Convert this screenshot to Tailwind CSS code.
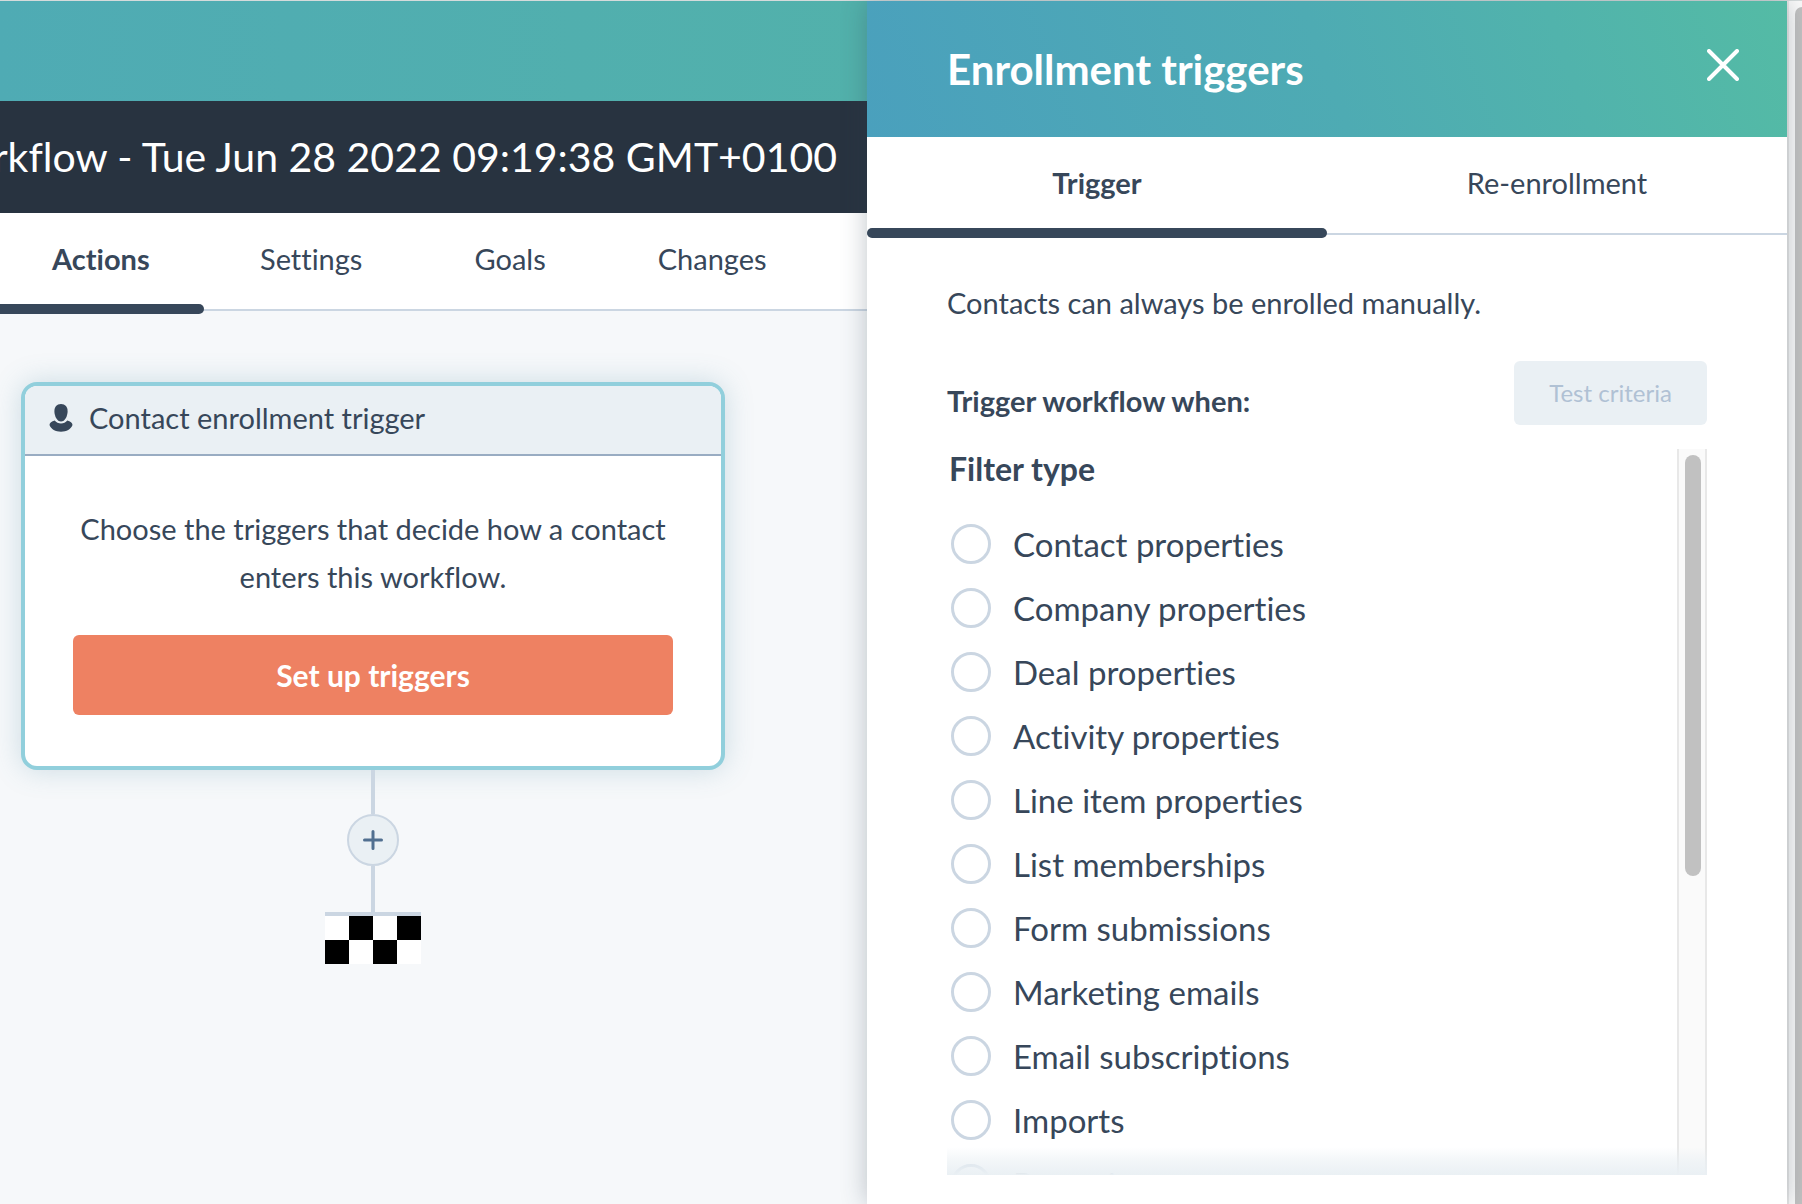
<!DOCTYPE html>
<html lang="en">
<head>
    <meta charset="UTF-8">
    <meta name="viewport" content="width=device-width, initial-scale=1.0">
    <title>Enrollment triggers</title>
    <script src="https://cdn.jsdelivr.net/npm/@tailwindcss/browser@4"></script>
</head>
<body class="h-screen overflow-hidden bg-white font-['Lato',sans-serif] [font-variant-ligatures:no-common-ligatures] text-[#37475a]">

  <div class="flex h-full border-t border-[#d5dbdb]">

    <!-- Workflow editor -->
    <main class="flex-1 min-w-0 flex flex-col overflow-hidden bg-[#f6f8fa]">
      <div class="h-[100px] shrink-0 bg-linear-to-r from-[#4fabb4] to-[#52b1ab]"></div>
      <header class="h-28 shrink-0 flex items-center justify-end bg-[#283340] px-[30px]">
        <h1 class="whitespace-nowrap text-[41px] leading-[48px] text-white">Workflow - Tue Jun 28 2022 09:19:38 GMT+0100</h1>
      </header>

      <nav class="h-[98px] shrink-0 flex bg-white border-b-2 border-[#cbd6e2] text-[29px] leading-8">
        <a href="#" class="relative w-[204px] pl-[52px] pt-[30px] font-bold">Actions
          <span class="absolute left-0 right-0 -bottom-[5px] h-[10px] rounded-r-md bg-[#37475a]"></span>
        </a>
        <a href="#" class="px-14 pt-[30px]">Settings</a>
        <a href="#" class="px-14 pt-[30px]">Goals</a>
        <a href="#" class="pl-14 pt-[30px]">Changes</a>
      </nav>

      <div class="flex flex-col items-center pt-[71px] pl-[21px] pr-[142px]">
        <section class="w-full rounded-2xl border-4 border-[#91cfdc] bg-white shadow-[0_0_28px_rgba(80,140,165,0.25)]">
          <div class="flex items-center gap-4 h-[70px] px-6 pb-1 rounded-t-xl bg-[#eaf0f4] border-b-2 border-[#99acc2]">
            <svg class="w-6 h-7" viewBox="0 0 24 28" fill="#37475a">
              <path d="M12 0c4.300 0 6.600 2.900 6.600 7 0 5.200-2.700 10.600-6.600 10.600S5.400 12.200 5.400 7C5.400 2.900 7.700 0 12 0z"/>
              <path d="M5.700 16.400c1.600 2 3.800 3 6.300 3s4.700-1 6.300-3c3 .9 5.200 2.400 5.200 4.600-1.500 4.200-6 6.700-11.500 6.700S2 25.200.5 21c0-2.200 2.200-3.700 5.200-4.600z"/>
            </svg>
            <h2 class="text-[29px] leading-8">Contact enrollment trigger</h2>
          </div>
          <div class="px-12 pt-[49px] pb-[51px]">
            <p class="text-center text-[29px] leading-[48px]">Choose the triggers that decide how a contact<br>enters this workflow.</p>
            <button type="button" class="mt-[34px] w-full h-20 rounded-md bg-[#ee8162] text-[30px] leading-8 font-bold text-white">Set up triggers</button>
          </div>
        </section>

        <div class="w-1 h-11 bg-[#cbd6e2]"></div>
        <button type="button" aria-label="Add action" class="flex items-center justify-center w-[52px] h-[52px] rounded-full border-2 border-[#cbd6e2] bg-[#eaf0f4]">
          <svg class="w-5 h-5" viewBox="0 0 20 20" stroke="#516f90" stroke-width="3" stroke-linecap="round">
            <path d="M10 1.500v17M1.500 10h17"/>
          </svg>
        </button>
        <div class="w-1 h-[46px] bg-[#cbd6e2]"></div>
        <svg class="w-24 h-[52px]" viewBox="0 0 96 52">
          <path fill="#fff" d="M0 4h96v48H0z"/>
          <path fill="#cbd6e2" d="M0 0h96v4H0z"/>
          <path fill="#000" d="M24 4h24v24H24zM72 4h24v24H72zM0 28h24v24H0zM48 28h24v24H48z"/>
        </svg>
      </div>
    </main>

    <!-- Side panel -->
    <aside class="relative w-[920px] shrink-0 flex flex-col bg-white shadow-[0_0_24px_rgba(45,62,80,0.3)]">
      <header class="h-[136px] shrink-0 flex items-center justify-between pl-20 pr-12 bg-linear-[70deg] from-[#4aa0bd] via-[#4eabb3] to-[#54bba5] text-white">
        <h2 class="text-[42px] leading-[48px] font-bold">Enrollment triggers</h2>
        <button type="button" aria-label="Close" class="mb-2">
          <svg class="w-8 h-8" viewBox="0 0 32 32" fill="none" stroke="#fff" stroke-width="4" stroke-linecap="round">
            <path d="M2 2l28 28M30 2L2 30"/>
          </svg>
        </button>
      </header>

      <nav class="h-[98px] shrink-0 flex border-b-2 border-[#cbd6e2] text-center text-[29px] leading-8">
        <a href="#" class="relative flex-1 pt-[30px] font-bold">Trigger
          <span class="absolute left-0 right-0 -bottom-[5px] h-[10px] rounded-md bg-[#37475a]"></span>
        </a>
        <a href="#" class="flex-1 pt-[30px]">Re-enrollment</a>
      </nav>

      <div class="flex-1 min-h-0 flex flex-col px-20 pt-[52px] pb-[29px]">
        <p class="text-[29px] leading-8">Contacts can always be enrolled manually.</p>
        <div class="mt-[42px] flex items-center justify-between">
          <h3 class="pt-4 text-[29px] leading-8 font-bold">Trigger workflow when:</h3>
          <button type="button" disabled class="w-[193px] h-16 rounded-md bg-[#eaf0f4] text-2xl text-[#b0c1d4]">Test criteria</button>
        </div>

        <div class="relative mt-6 flex-1 min-h-0 flex overflow-hidden">
          <fieldset class="flex-1">
            <legend class="pl-[2px] text-[32px] leading-10 font-bold">Filter type</legend>
            <div class="mt-[23px] ml-1 text-[33px] leading-10">
              <label class="flex items-center gap-[22px] h-16"><input type="radio" name="filter" class="appearance-none w-10 h-10 rounded-full border-[3px] border-[#cbd6e2]">Contact properties</label>
              <label class="flex items-center gap-[22px] h-16"><input type="radio" name="filter" class="appearance-none w-10 h-10 rounded-full border-[3px] border-[#cbd6e2]">Company properties</label>
              <label class="flex items-center gap-[22px] h-16"><input type="radio" name="filter" class="appearance-none w-10 h-10 rounded-full border-[3px] border-[#cbd6e2]">Deal properties</label>
              <label class="flex items-center gap-[22px] h-16"><input type="radio" name="filter" class="appearance-none w-10 h-10 rounded-full border-[3px] border-[#cbd6e2]">Activity properties</label>
              <label class="flex items-center gap-[22px] h-16"><input type="radio" name="filter" class="appearance-none w-10 h-10 rounded-full border-[3px] border-[#cbd6e2]">Line item properties</label>
              <label class="flex items-center gap-[22px] h-16"><input type="radio" name="filter" class="appearance-none w-10 h-10 rounded-full border-[3px] border-[#cbd6e2]">List memberships</label>
              <label class="flex items-center gap-[22px] h-16"><input type="radio" name="filter" class="appearance-none w-10 h-10 rounded-full border-[3px] border-[#cbd6e2]">Form submissions</label>
              <label class="flex items-center gap-[22px] h-16"><input type="radio" name="filter" class="appearance-none w-10 h-10 rounded-full border-[3px] border-[#cbd6e2]">Marketing emails</label>
              <label class="flex items-center gap-[22px] h-16"><input type="radio" name="filter" class="appearance-none w-10 h-10 rounded-full border-[3px] border-[#cbd6e2]">Email subscriptions</label>
              <label class="flex items-center gap-[22px] h-16"><input type="radio" name="filter" class="appearance-none w-10 h-10 rounded-full border-[3px] border-[#cbd6e2]">Imports</label>
              <label class="flex items-center gap-[22px] h-16"><input type="radio" name="filter" class="appearance-none w-10 h-10 rounded-full border-[3px] border-[#cbd6e2]">Page views</label>
            </div>
          </fieldset>
          <div class="w-[30px] pt-[6px] pl-[6px] border-x-2 border-[#e8e8e8] bg-[#fafafa]">
            <div class="w-4 h-[421px] rounded-full bg-[#c1c1c1]"></div>
          </div>
          <!-- fade over the cut-off row -->
          <div class="absolute inset-x-0 bottom-0 h-7 bg-linear-to-t from-[#eaf0f4] via-[#eaf0f4]/60 to-[#eaf0f4]/0"></div>
        </div>
      </div>
    </aside>

    <!-- Page scrollbar -->
    <div class="w-[15px] shrink-0 pt-[6px] pl-[6px] border-l-2 border-[#e8e8e8] bg-[#fafafa]">
      <div class="h-full rounded-tl-lg bg-[#c1c1c1]"></div>
    </div>
  </div>

</body>
</html>
